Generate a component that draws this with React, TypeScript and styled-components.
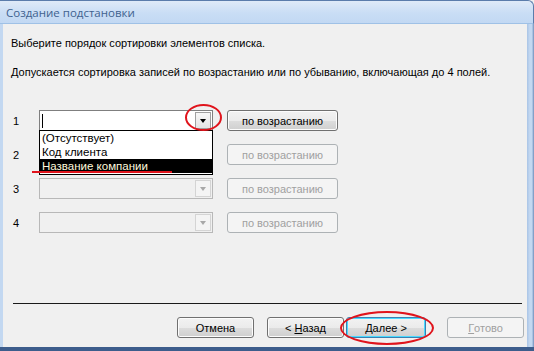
import styled, { createGlobalStyle } from "styled-components";

const GlobalStyle = createGlobalStyle`
  html, body { margin: 0; padding: 0; background: #f0f0f0; }
  body { font-family: "Liberation Sans", Arial, sans-serif; }
`;

// window frame
const Window = styled.div`
  position: relative;
  width: 534px;
  height: 351px;
  display: flex;
  flex-direction: column;
  overflow: hidden;
  background: #f0f0f0;
`;

const TitleBar = styled.div`
  height: 22px;
  flex: none;
  display: flex;
  align-items: center;
  padding-left: 6px;
  border-top: 1px solid #5b7cab;
  border-bottom: 1px solid #9fc1e6;
  border-right: 1px solid #5b7cab;
  border-top-right-radius: 6px;
  background: linear-gradient(#dfeaf8, #c9ddf5 55%, #c2d8f3);
  color: #40628f;
  font-family: "Open Sans", "Liberation Sans", sans-serif;
  font-size: 11.5px;
`;

const Body = styled.div`
  flex: 1;
  display: flex;
  border-bottom: 4px solid #3d5d8c;
`;

const LeftEdge = styled.div`
  width: 3px;
  background: #c3d8f1;
`;

const RightEdge = styled.div`
  width: 7px;
  background: linear-gradient(90deg, #a9c4e6, #c3d8f1 40%, #c3d8f1 70%, #6f8fbc);
`;

const Client = styled.div`
  flex: 1;
  display: flex;
  flex-direction: column;
  padding: 13px 0 0 8px;
  font-size: 11px;
  color: #000;
`;

const Line = styled.div<{ $mt?: number }>`
  height: 13px;
  line-height: 13px;
  margin-top: ${(p) => p.$mt ?? 0}px;
  white-space: nowrap;
`;

const Rows = styled.div`
  position: relative;
  margin-top: 31px;
  display: grid;
  grid-template-columns: 14px 174px 111px;
  column-gap: 14px;
  grid-auto-rows: 21px;
  row-gap: 13px;
  align-items: center;
`;

const Num = styled.div`
  padding-left: 2px;
  font-size: 11px;
`;

const Combo = styled.div<{ $disabled?: boolean }>`
  height: 21px;
  box-sizing: border-box;
  display: flex;
  padding: 1px;
  border: 1px solid ${(p) => (p.$disabled ? "#b8b8b8" : "#7f7f7f")};
  background: ${(p) => (p.$disabled ? "#f0f0f0" : "#fff")};
`;

const ComboField = styled.div`
  flex: 1;
  display: flex;
  align-items: center;
  padding-left: 1px;
`;

const Caret = styled.span`
  width: 1px;
  height: 14px;
  background: #000;
`;

const ArrowBtn = styled.div<{ $disabled?: boolean }>`
  width: 16px;
  box-sizing: border-box;
  display: flex;
  align-items: center;
  justify-content: center;
  border: 1px solid ${(p) => (p.$disabled ? "#d4d4d4" : "#a0a0a0")};
  background: ${(p) => (p.$disabled ? "#f4f4f4" : "linear-gradient(#f8f8f8, #e4e4e4)")};
  &::after {
    content: "";
    border-left: 3.5px solid transparent;
    border-right: 3.5px solid transparent;
    border-top: 4px solid ${(p) => (p.$disabled ? "#a8a8a8" : "#000")};
  }
`;

const Button = styled.div<{ $disabled?: boolean; $default?: boolean; $w?: number }>`
  width: ${(p) => p.$w ?? 111}px;
  height: 21px;
  box-sizing: border-box;
  display: flex;
  align-items: center;
  justify-content: center;
  border-radius: 3px;
  font-size: 11px;
  white-space: pre;
  border: 1px solid ${(p) => (p.$disabled ? "#adb2b5" : p.$default ? "#3c7fb1" : "#707070")};
  color: ${(p) => (p.$disabled ? "#a0a0a0" : "#000")};
  background: ${(p) =>
    p.$disabled
      ? "#f4f4f4"
      : "linear-gradient(#f2f2f2 0%, #ebebeb 50%, #dddddd 51%, #cfcfcf 100%)"};
  box-shadow: ${(p) =>
    p.$default ? "inset 0 0 0 1px #48d9ff" : p.$disabled ? "none" : "inset 0 0 0 1px #fcfcfc"};
`;

const Key = styled.span`
  text-decoration: underline;
`;

const DropList = styled.div`
  position: absolute;
  left: 28px;
  top: 20px;
  width: 174px;
  box-sizing: border-box;
  border: 1px solid #000;
  background: #fff;
  z-index: 2;
  padding-bottom: 1px;
`;

const Item = styled.div<{ $selected?: boolean }>`
  height: 14px;
  line-height: 14px;
  padding-left: 2px;
  font-size: 11.5px;
  background: ${(p) => (p.$selected ? "#000" : "transparent")};
  color: ${(p) => (p.$selected ? "#fff8dc" : "#000")};
`;

const Underline = styled.div`
  position: absolute;
  left: 21px;
  top: 61px;
  width: 140px;
  height: 2px;
  background: #e0141c;
  z-index: 3;
`;

const Ring = styled.div<{ $x: number; $y: number; $w: number; $h: number }>`
  position: absolute;
  left: ${(p) => p.$x}px;
  top: ${(p) => p.$y}px;
  width: ${(p) => p.$w}px;
  height: ${(p) => p.$h}px;
  box-sizing: border-box;
  border: 2px solid #e0141c;
  border-radius: 50%;
  z-index: 4;
  pointer-events: none;
`;

const Spacer = styled.div`
  flex: 1;
`;

const Separator = styled.div`
  height: 1px;
  margin: 0 0 13px 2px;
  width: 509px;
  background: #1a1a1a;
`;

const Footer = styled.div`
  position: relative;
  display: flex;
  gap: 13px;
  padding-left: 166px;
  margin-bottom: 9px;
`;

const NavGroup = styled.div`
  display: flex;
  gap: 2px;
  margin-right: 8px;
`;

const rows = [1, 2, 3, 4];

export default function App() {
  return (
    <Window>
      <GlobalStyle />
      <TitleBar>Создание подстановки</TitleBar>
      <Body>
        <LeftEdge />
        <Client>
          <Line>Выберите порядок сортировки элементов списка.</Line>
          <Line $mt={16}>
            Допускается сортировка записей по возрастанию или по убыванию, включающая до 4 полей.
          </Line>
          <Rows>
            {rows.map((n) => {
              const off = n !== 1;
              return [
                <Num key={`n${n}`}>{n}</Num>,
                <Combo key={`c${n}`} $disabled={off}>
                  <ComboField>{!off && <Caret />}</ComboField>
                  <ArrowBtn $disabled={off} />
                </Combo>,
                <Button key={`b${n}`} $disabled={off}>
                  по возрастанию
                </Button>,
              ];
            })}
            <DropList>
              <Item>(Отсутствует)</Item>
              <Item>Код клиента</Item>
              <Item $selected>Название компании</Item>
            </DropList>
            <Underline />
            <Ring $x={174} $y={-6} $w={37} $h={27} />
          </Rows>
          <Spacer />
          <Separator />
          <Footer>
            <Button $w={77}>Отмена</Button>
            <NavGroup>
              <Button $w={77}>
                {"< "}
                <Key>Н</Key>азад
              </Button>
              <Button $w={80} $default>
                <Key>Д</Key>
                {"алее >"}
              </Button>
            </NavGroup>
            <Button $w={77} $disabled>
              <Key>Г</Key>отово
            </Button>
            <Ring $x={329} $y={-6} $w={94} $h={34} />
          </Footer>
        </Client>
        <RightEdge />
      </Body>
    </Window>
  );
}
